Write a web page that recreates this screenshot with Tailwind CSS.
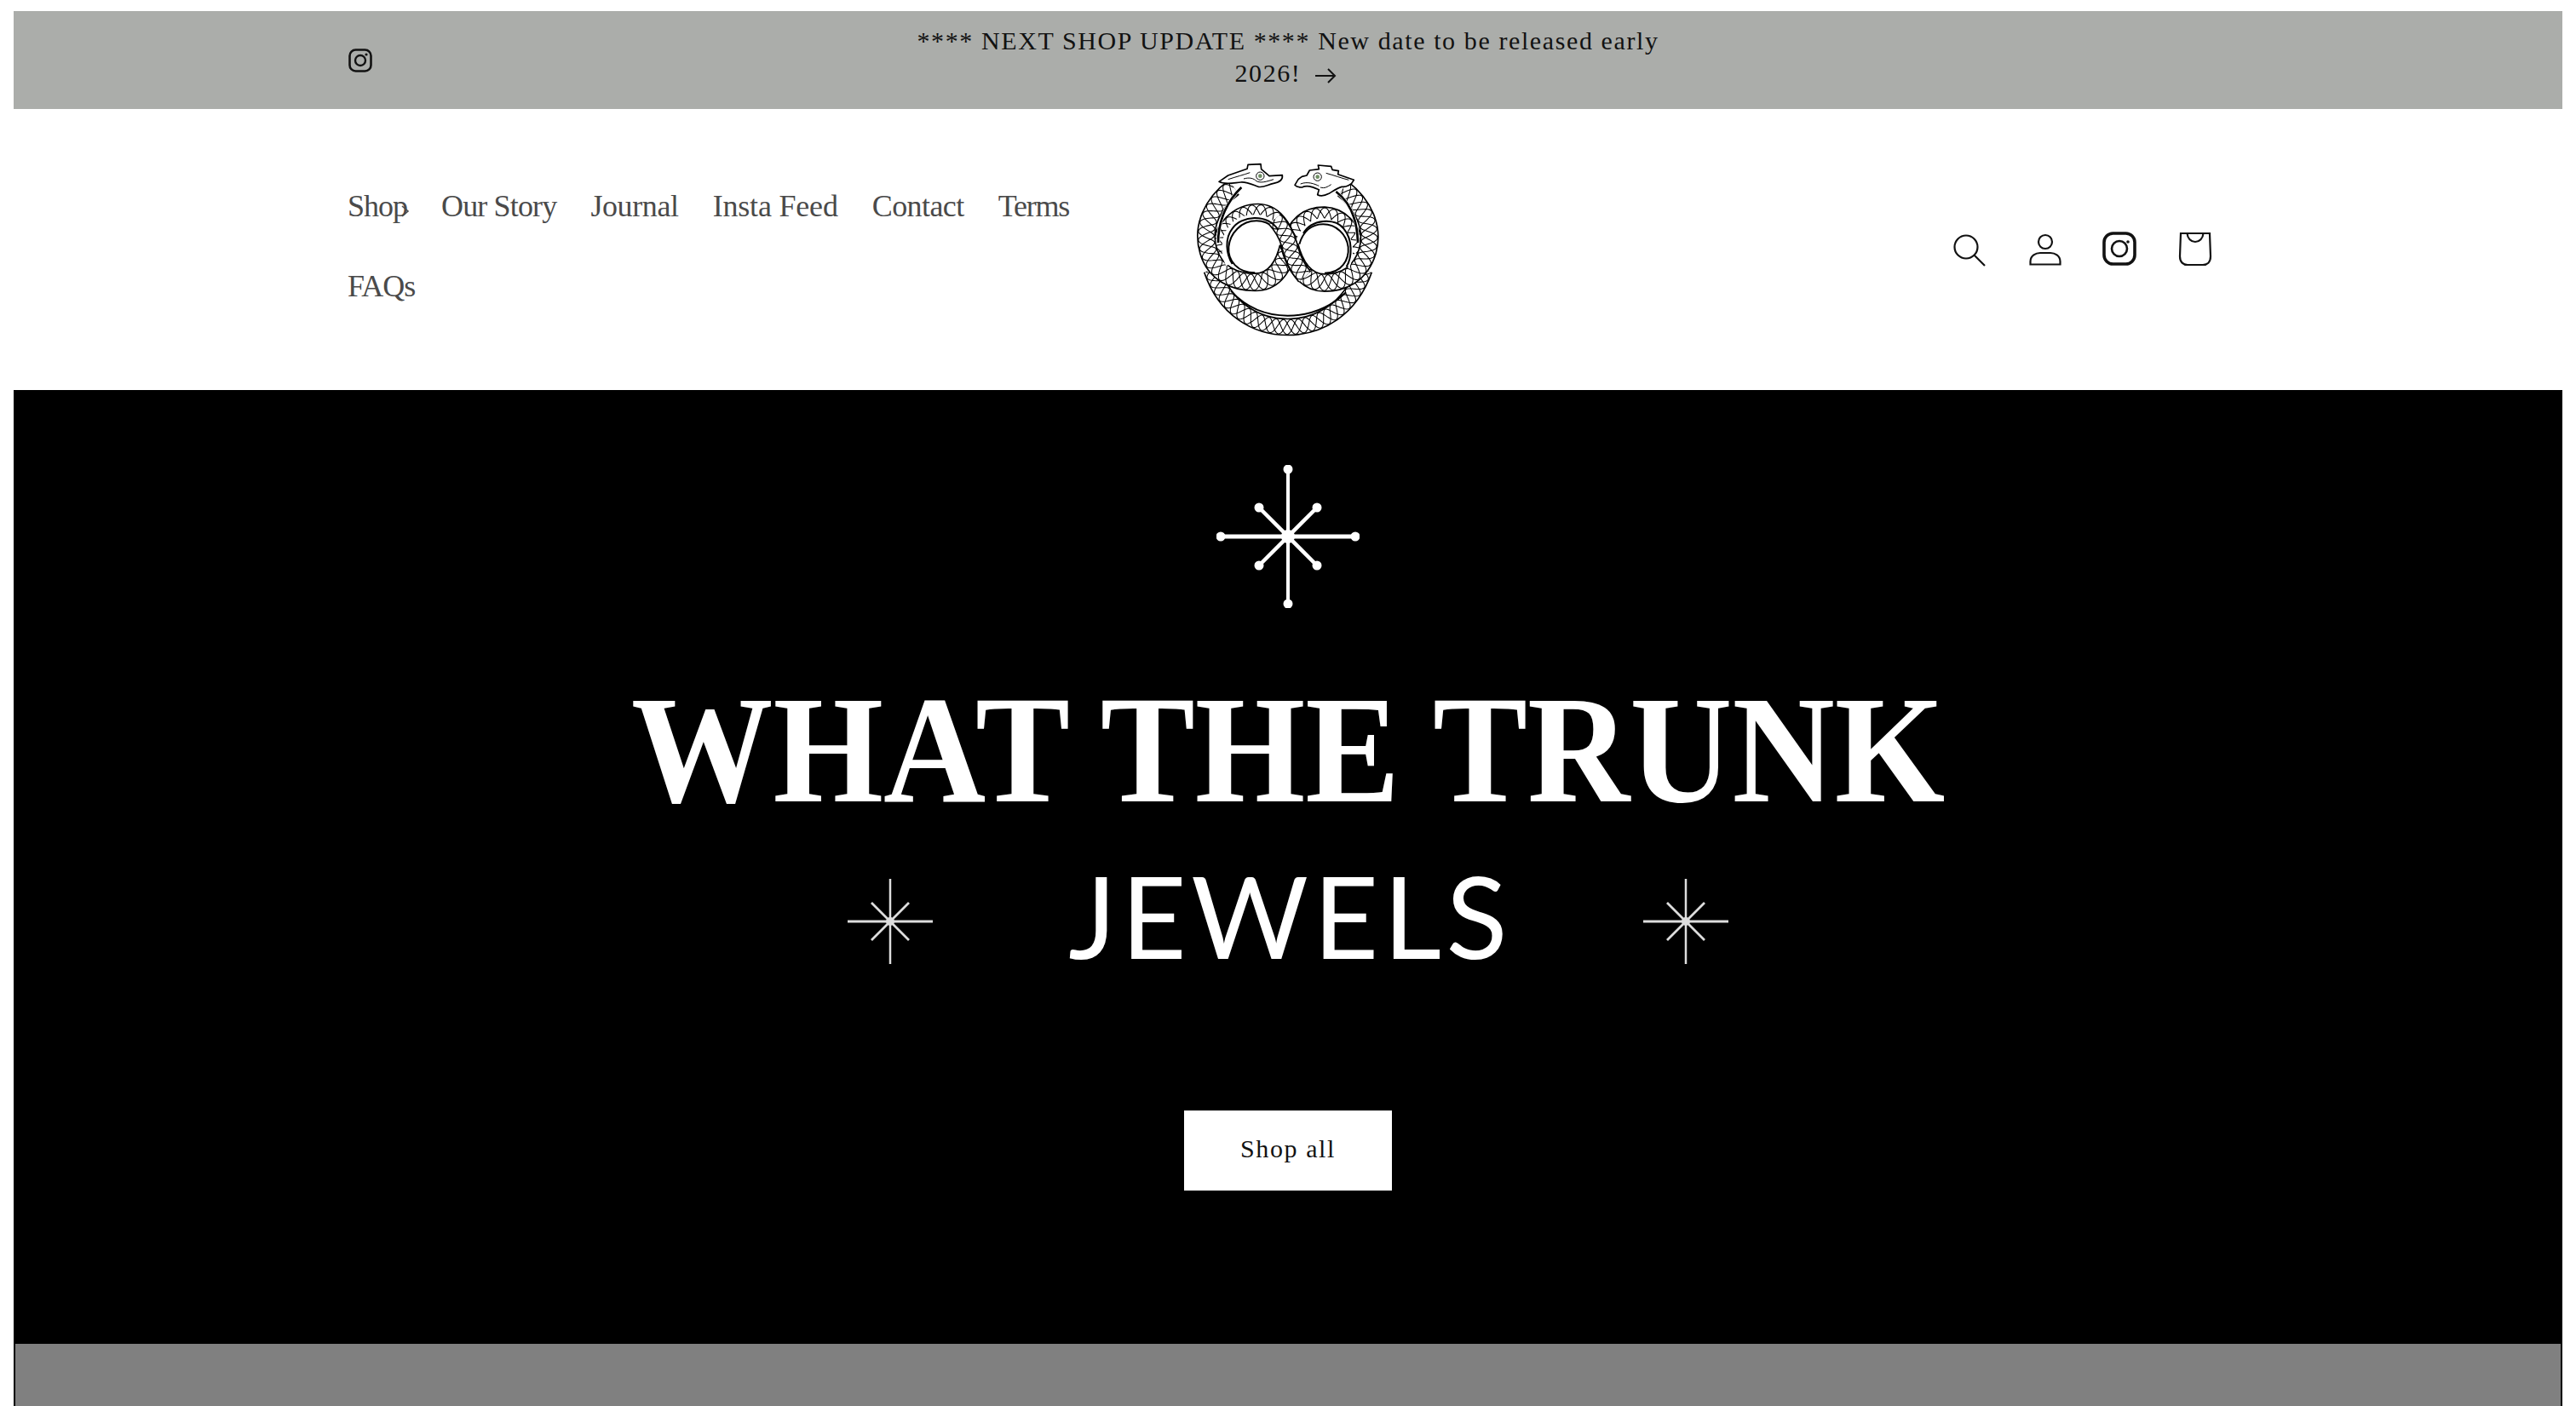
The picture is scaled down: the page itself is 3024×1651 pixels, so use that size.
<!DOCTYPE html>
<html lang="en">
<head>
<meta charset="UTF-8">
<title>What The Trunk Jewels</title>
<script src="https://cdn.jsdelivr.net/npm/@tailwindcss/browser@4"></script>
</head>
<body class="bg-white h-[1651px] overflow-hidden font-['Liberation_Serif',serif]">
<div class="pt-[13px] px-4">
  <!-- announcement -->
  <div class="bg-[#abadaa] h-[115px] px-[392px] flex items-center relative text-[#121212]">
    <svg class="absolute left-[393px] top-[44px]" width="28" height="28" viewBox="0 0 28 28" fill="none" stroke="#121212"><rect x="1.500" y="1.500" width="25" height="25" rx="7" stroke-width="2.600"/><circle cx="14" cy="14" r="6" stroke-width="2.400"/><circle cx="21" cy="7" r="1.600" fill="#121212" stroke="none"/></svg>
    <p class="w-full text-center text-[30px] leading-[38px] tracking-[1.6px] px-[380px] -mt-[8px]">**** NEXT SHOP UPDATE **** New date to be released early<br>2026!
      <svg class="inline ml-[6px] mr-[6px] align-[-3px]" width="26" height="20" viewBox="0 0 26 20" fill="none" stroke="#121212" stroke-width="2"><path d="M1 10H24M16 2l8 8-8 8"/></svg></p>
  </div>

  <!-- header -->
  <header class="h-[330px] px-[392px] grid grid-cols-[minmax(0,1fr)_280px_minmax(0,1fr)] items-center">
    <nav class="flex flex-wrap content-start w-[900px] gap-x-[40px] gap-y-[47px] text-[36px] leading-[47px] text-[#4a4a4a] h-[141px] -mt-[8px]">
      <a class="relative -tracking-[1px]">Shop<svg class="absolute right-[-4px] top-[22px]" width="12" height="14" viewBox="0 0 12 14" fill="none" stroke="#4a4a4a" stroke-width="1.600"><path d="M2 1l7 6-7 6"/></svg></a>
      <a class="-tracking-[0.85px]">Our Story</a><a class="-tracking-[0.39px]">Journal</a><a class="-tracking-[0.19px]">Insta Feed</a><a class="-tracking-[0.57px]">Contact</a><a class="-tracking-[1.2px]">Terms</a><a class="basis-full -tracking-[1px]">FAQs</a>
    </nav>

    <!-- ouroboros logo -->
    <svg id="logo" class="justify-self-center translate-x-[8px] -translate-y-[3px]" width="280" height="240" viewBox="0 0 840 720" fill="none">
      <g id="snake"></g>
      <path d="M200 420C178 385 172 330 200 295C232 250 320 240 362 300" stroke="#000" stroke-width="6"/>
      <path d="M450 312C478 262 560 255 592 295C625 335 622 395 602 430" stroke="#000" stroke-width="6"/>
      <path d="M150 345C150 262 185 195 232 150" stroke="#fff" stroke-width="12"/><path d="M150 345C150 262 185 195 232 150" stroke="#000" stroke-width="8"/>
      <path d="M642 345C640 262 612 200 565 165" stroke="#fff" stroke-width="12"/><path d="M642 345C640 262 612 200 565 165" stroke="#000" stroke-width="8"/>
      <path d="M153 130L185 108L252 85L255 70L300 68L302 86L330 110L376 107C378 122 370 132 345 136C325 140 310 152 292 148C270 140 250 130 230 132C205 134 175 142 153 130Z" fill="#fff" stroke="#000" stroke-width="5" stroke-linejoin="round"/>
      <circle cx="298" cy="110" r="14" fill="#fff" stroke="#000" stroke-width="3"/><circle cx="298" cy="110" r="7" fill="#6f8f63"/>
      <path d="M185 122C215 112 240 106 262 98M240 120C260 114 275 118 285 128C300 136 320 130 345 122" stroke="#000" stroke-width="3"/>
      <path d="M420 142L432 122L445 112L462 108L472 90L505 86L502 72L548 76L552 88L574 92L572 104L628 124C620 142 600 150 585 148C570 152 552 165 540 172C525 180 510 182 500 176L505 158C485 150 465 140 445 150C435 150 425 148 420 142Z" fill="#fff" stroke="#000" stroke-width="5" stroke-linejoin="round"/>
      <circle cx="500" cy="113" r="14" fill="#fff" stroke="#000" stroke-width="3"/><circle cx="500" cy="113" r="7" fill="#6f8f63"/>
      <path d="M530 100C560 108 585 118 610 124M510 150C525 155 535 148 548 140M440 138C465 128 490 138 505 145" stroke="#000" stroke-width="3"/>
    </svg>

    <!-- header icons -->
    <div class="flex justify-end mr-[-5px]">
      <a class="w-[88px] h-[88px] flex items-center justify-center"><svg width="44" height="44" viewBox="0 0 44 44" fill="none" stroke="#121212" stroke-width="2.200"><circle cx="17" cy="19" r="13.500"/><path d="M26.500 28.500L39 41"/></svg></a>
      <a class="w-[88px] h-[88px] flex items-center justify-center"><svg width="44" height="44" viewBox="0 0 44 44" fill="none" stroke="#121212" stroke-width="2.200"><circle cx="22" cy="13" r="8"/><path d="M4.500 39.500V36C4.500 29 11 26 16 26H28C33 26 39.500 29 39.500 36V39.500Z"/></svg></a>
      <a class="w-[88px] h-[88px] flex items-center justify-center"><svg width="44" height="44" viewBox="0 0 44 44" fill="none" stroke="#121212"><rect x="3" y="3" width="36" height="36" rx="10.500" stroke-width="3.600"/><circle cx="21" cy="21" r="9" stroke-width="2.600"/><circle cx="31" cy="13" r="1.800" fill="#121212" stroke="none"/></svg></a>
      <a class="w-[88px] h-[88px] flex items-center justify-center"><svg width="44" height="44" viewBox="0 0 44 44" fill="none" stroke="#121212" stroke-width="2.200"><path d="M5 3H39L40 30C40 37 36 40 31 40H13C8 40 4 37 4 30Z"/><path d="M12.500 3C13 9 17 13 22 13C27 13 31 9 31.500 3"/></svg></a>
    </div>
  </header>

  <!-- hero -->
  <section class="h-[1120px] bg-black flex flex-col items-center relative">
    <svg class="mt-[88px]" width="168" height="168" viewBox="0 0 168 168" fill="#fff" stroke="#fff"><path d="M84 2V166" stroke-width="4"/><path d="M2 84H166" stroke-width="5"/><path d="M50 50L118 118M118 50L50 118" stroke-width="4.500"/><g stroke="none"><circle cx="84" cy="5" r="5.500"/><circle cx="84" cy="163" r="5.500"/><circle cx="5" cy="84" r="5.500"/><circle cx="163" cy="84" r="5.500"/><circle cx="50" cy="50" r="5.500"/><circle cx="118" cy="50" r="5.500"/><circle cx="50" cy="118" r="5.500"/><circle cx="118" cy="118" r="5.500"/><circle cx="84" cy="84" r="8"/></g></svg>
    <h1 class="mt-[76px] text-white font-bold text-[181px] leading-[181px] whitespace-nowrap scale-x-[0.92]">WHAT THE TRUNK</h1>
    <div class="mt-[59px] w-[1038px] flex items-center justify-between">
      <svg width="104" height="104" viewBox="0 0 104 104" fill="#ddd" stroke="#ddd"><path d="M52 2V102" stroke-width="2.500"/><path d="M2 52H102" stroke-width="3"/><path d="M30 30L74 74M74 30L30 74" stroke-width="2.800"/><circle cx="52" cy="52" r="5" stroke="none"/></svg>
      <span class="text-white font-['Lato',sans-serif] font-normal text-[133px] leading-[104px] tracking-[5.500px] mr-[-5.500px] -translate-y-[7px]">JEWELS</span>
      <svg width="104" height="104" viewBox="0 0 104 104" fill="#ddd" stroke="#ddd"><path d="M52 2V102" stroke-width="2.500"/><path d="M2 52H102" stroke-width="3"/><path d="M30 30L74 74M74 30L30 74" stroke-width="2.800"/><circle cx="52" cy="52" r="5" stroke="none"/></svg>
    </div>
    <a class="mt-[170px] w-[244px] h-[94px] pb-[5px] bg-white text-[#121212] text-[30px] tracking-[1.6px] flex items-center justify-center">Shop all</a>
  </section>
  <div class="h-[73px] bg-[#808080] border-x-2 border-black"></div>
</div>
<script>
  // snake body: each segment is a black band, a white band and a lattice that follows the curve
  const NS = 'http://www.w3.org/2000/svg';
  const snake = document.getElementById('snake');
  const segments = [
    ['M128 440C175 580 285 642 395 642C505 642 615 580 664 440', 62],
    ['M400 350C425 275 470 246 525 247C590 250 625 300 645 380', 60],
    ['M145 380C165 290 220 236 290 236C345 236 380 285 400 350', 60],
    ['M205 150C130 205 90 290 116 375C140 455 210 484 280 484C340 484 380 440 400 350', 66],
    ['M590 155C660 210 700 290 676 375C650 460 585 486 525 486C460 486 420 430 400 350', 66],
    ['M350 262C375 290 392 320 400 350C410 395 425 430 455 465', 60]
  ];
  function add(d, color, width) {
    const p = document.createElementNS(NS, 'path');
    p.setAttribute('d', d);
    p.setAttribute('stroke', color);
    p.setAttribute('stroke-width', width);
    snake.appendChild(p);
    return p;
  }
  function band(d, w) {
    const base = add(d, '#000', w);
    add(d, '#fff', w - 10);
    const len = base.getTotalLength();
    const wave = 84, amp = w / 2 - 5;
    for (const phase of [0, 1 / 3, 2 / 3]) {
      let line = '';
      for (let s = 0; s < len; s += 3) {
        const a = base.getPointAtLength(s), b = base.getPointAtLength(s + 1);
        const dx = b.x - a.x, dy = b.y - a.y;
        const k = Math.hypot(dx, dy) || 1;
        const off = amp * Math.sin(2 * Math.PI * (s / wave + phase));
        line += (line ? 'L' : 'M') + (a.x - dy / k * off).toFixed(1) + ' ' + (a.y + dx / k * off).toFixed(1);
      }
      add(line, '#000', 3.2);
    }
  }
  segments.slice(0, 5).forEach(([d, w]) => band(d, w));
  // rims round the two holes and above the lower arc
  add('M192 420C175 385 175 335 195 305C222 262 262 262 290 262C335 265 365 305 376 350', '#fff', 32);
  add('M436 350C450 305 480 275 520 275C565 278 602 315 608 360C610 390 605 410 598 425', '#fff', 32);
  add('M280 451C220 451 183 410 187 360C192 310 232 268 285 268C335 268 365 305 376 350', '#000', 6);
  add('M525 452C585 452 612 405 608 360C602 315 565 280 520 280C475 280 448 310 436 350', '#000', 6);
  add('M195 515C255 580 330 602 395 602C470 602 540 578 600 520', '#000', 6);
  band(...segments[5]);
</script>
</body>
</html>
